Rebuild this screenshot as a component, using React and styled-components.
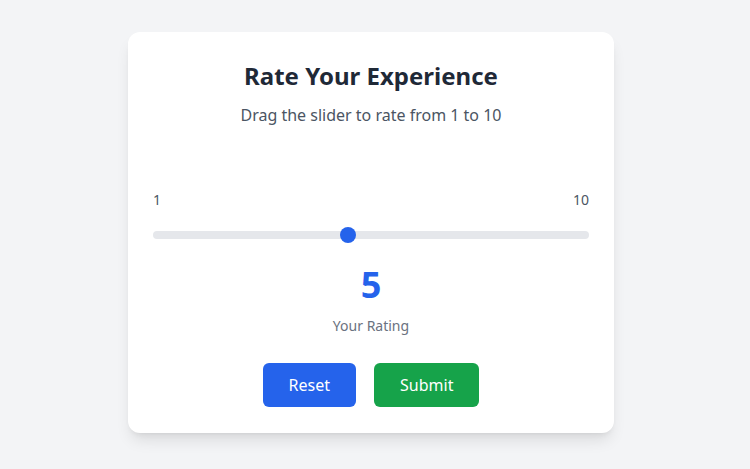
import { useState } from 'react'
import styled, { createGlobalStyle } from 'styled-components'

const GlobalStyle = createGlobalStyle`
  * { box-sizing: border-box; }
  body {
    margin: 0;
    background: #f3f4f6;
    font-family: "Noto Sans", "Open Sans", sans-serif;
  }
`;

const Page = styled.main`
  min-height: 100vh;
  display: flex;
  align-items: flex-start;
  justify-content: center;
  padding: 32px 8px 0 0;
`;

const Card = styled.section`
  width: 486px;
  height: 401px;
  background: #ffffff;
  border-radius: 12px;
  box-shadow: 0 10px 15px -3px rgba(0, 0, 0, 0.1), 0 4px 6px -4px rgba(0, 0, 0, 0.1);
  padding: 24px 25px;
  display: flex;
  flex-direction: column;
  align-items: center;
`;

const Title = styled.h1`
  margin: 0;
  font-size: 24px;
  line-height: 40px;
  font-weight: 700;
  color: #1f2937;
`;

const Subtitle = styled.p`
  margin: 0;
  font-size: 16px;
  line-height: 38px;
  color: #4b5563;
`;

const SliderBlock = styled.div`
  width: 100%;
  margin-top: 56px;
`;

const Ends = styled.div`
  display: flex;
  justify-content: space-between;
  font-size: 14px;
  line-height: 20px;
  color: #4b5563;
`;

const Range = styled.input`
  -webkit-appearance: none;
  appearance: none;
  display: block;
  width: 100%;
  height: 8px;
  margin: 21px 0 0;
  border-radius: 4px;
  background: #e5e7eb;
  outline: none;

  &::-webkit-slider-thumb {
    -webkit-appearance: none;
    width: 16px;
    height: 16px;
    border-radius: 50%;
    background: #2563eb;
    border: none;
    cursor: pointer;
  }
`;

const Value = styled.div`
  margin-top: 24px;
  font-size: 36px;
  line-height: 44px;
  font-weight: 700;
  color: #2563eb;
`;

const Caption = styled.div`
  margin-top: 9px;
  font-size: 14px;
  line-height: 20px;
  color: #6b7280;
`;

const Actions = styled.div`
  display: flex;
  gap: 18px;
  margin-top: 27px;
`;

const Button = styled.button`
  height: 44px;
  padding: 0 26px;
  border: none;
  border-radius: 6px;
  background: ${({ $color }) => $color};
  color: #ffffff;
  font-family: inherit;
  font-size: 16px;
  cursor: pointer;
`;

export default function App() {
  const [rating, setRating] = useState(5)

  return (
    <>
      <GlobalStyle />
      <Page>
        <Card>
          <Title>Rate Your Experience</Title>
          <Subtitle>Drag the slider to rate from 1 to 10</Subtitle>
          <SliderBlock>
            <Ends>
              <span>1</span>
              <span>10</span>
            </Ends>
            <Range
              type="range"
              min="1"
              max="10"
              value={rating}
              onChange={(e) => setRating(Number(e.target.value))}
            />
          </SliderBlock>
          <Value>{rating}</Value>
          <Caption>Your Rating</Caption>
          <Actions>
            <Button $color="#2563eb" onClick={() => setRating(5)}>Reset</Button>
            <Button $color="#16a34a">Submit</Button>
          </Actions>
        </Card>
      </Page>
    </>
  )
}
